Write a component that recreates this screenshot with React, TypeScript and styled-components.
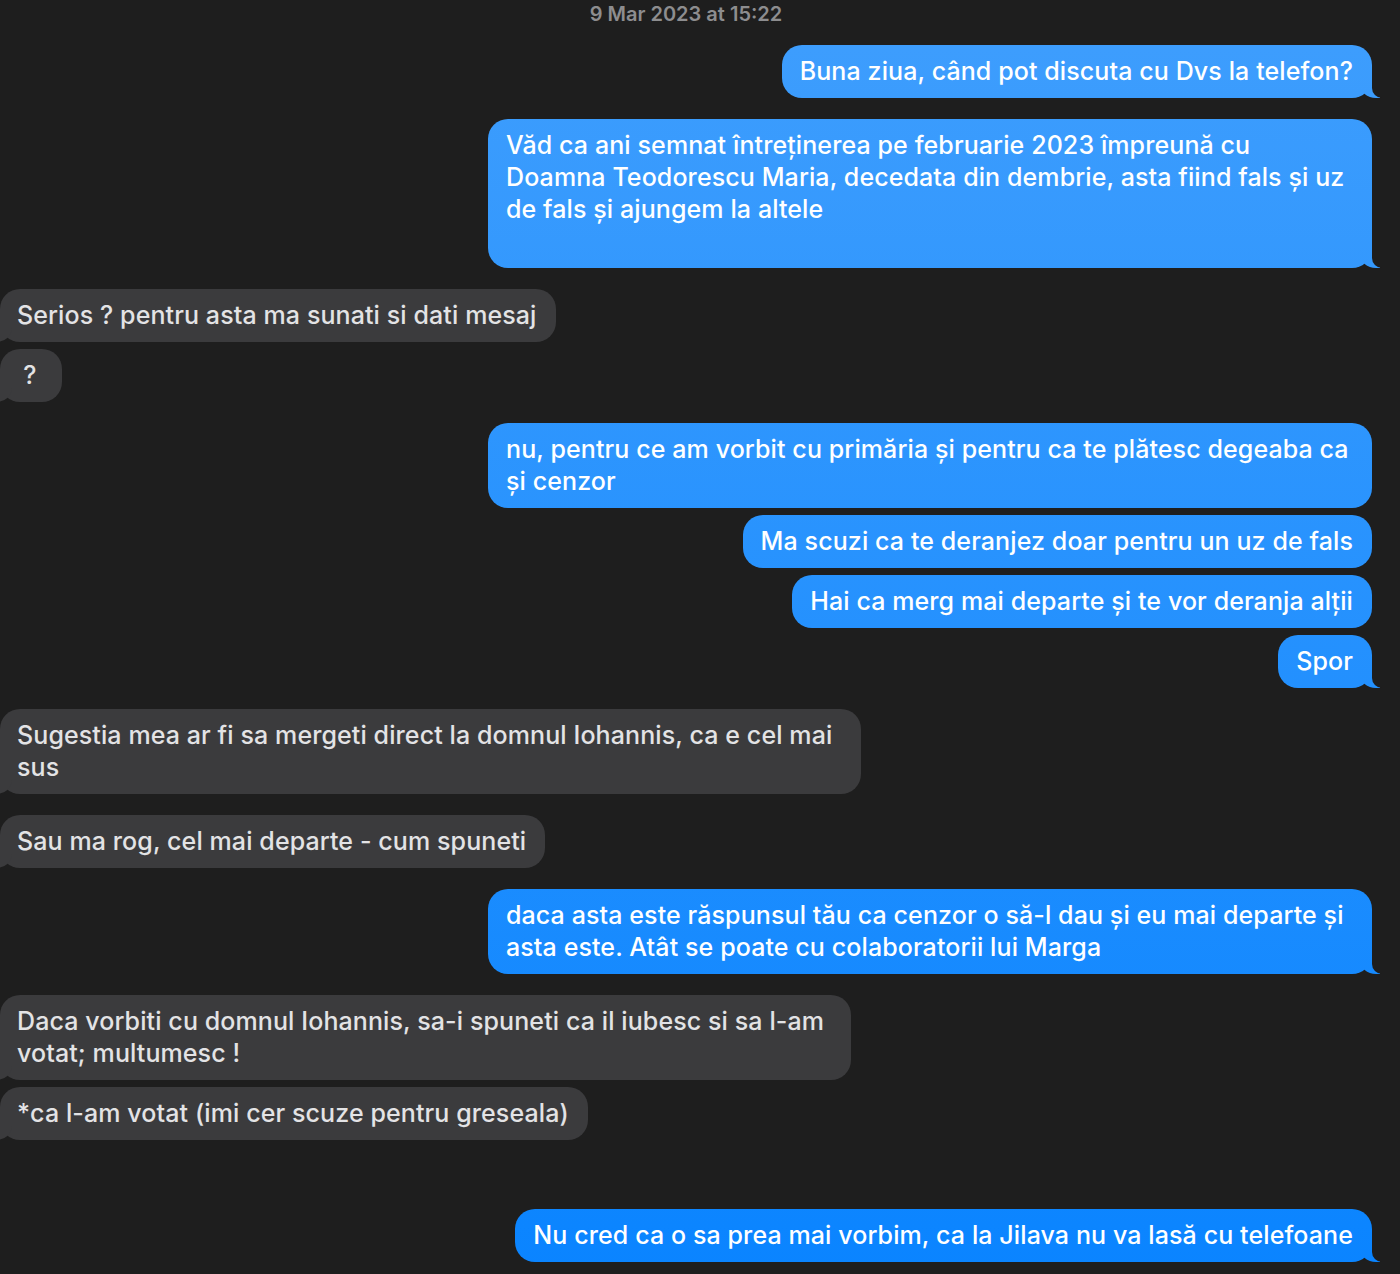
import styled, { createGlobalStyle, css } from 'styled-components';

const PAGE_BG = '#1e1e1e';
const BLUE = 'linear-gradient(180deg, #3f9efd 0px, #0a84ff 1274px) fixed';
const GRAY = '#3b3b3d';

const GlobalStyle = createGlobalStyle`
    html, body {
        margin: 0;
        padding: 0;
        background: ${PAGE_BG};
        overflow: hidden;
    }
    body {
        font-family: Inter, "Noto Sans", "Liberation Sans", sans-serif;
        -webkit-font-smoothing: antialiased;
    }
`

type Message = {
    me: boolean,
    lines: string[],
    gap: number,
    tail?: boolean,
    center?: boolean,
    width?: number
}

const messages: Message[] = [
    { me: true, gap: 17, tail: true, lines: ['Buna ziua, când pot discuta cu Dvs la telefon?'] },
    { me: true, gap: 21, tail: true, width: 884, lines: [
        'Văd ca ani semnat întreținerea pe februarie 2023 împreună cu',
        'Doamna Teodorescu Maria, decedata din dembrie, asta fiind fals și uz',
        'de fals și ajungem la altele',
        ''
    ] },
    { me: false, gap: 21, tail: true, lines: ['Serios ? pentru asta ma sunati si dati mesaj'] },
    { me: false, gap: 7, tail: true, center: true, lines: ['?'] },
    { me: true, gap: 21, width: 884, lines: [
        'nu, pentru ce am vorbit cu primăria și pentru ca te plătesc degeaba ca',
        'și cenzor'
    ] },
    { me: true, gap: 7, lines: ['Ma scuzi ca te deranjez doar pentru un uz de fals'] },
    { me: true, gap: 7, lines: ['Hai ca merg mai departe și te vor deranja alții'] },
    { me: true, gap: 7, tail: true, lines: ['Spor'] },
    { me: false, gap: 21, tail: true, width: 861, lines: [
        'Sugestia mea ar fi sa mergeti direct la domnul Iohannis, ca e cel mai',
        'sus'
    ] },
    { me: false, gap: 21, tail: true, lines: ['Sau ma rog, cel mai departe - cum spuneti'] },
    { me: true, gap: 21, tail: true, width: 884, lines: [
        'daca asta este răspunsul tău ca cenzor o să-l dau și eu mai departe și',
        'asta este. Atât se poate cu colaboratorii lui Marga'
    ] },
    { me: false, gap: 21, tail: true, width: 851, lines: [
        'Daca vorbiti cu domnul Iohannis, sa-i spuneti ca il iubesc si sa l-am',
        'votat; multumesc !'
    ] },
    { me: false, gap: 7, tail: true, lines: ['*ca l-am votat (imi cer scuze pentru greseala)'] },
    { me: true, gap: 69, tail: true, lines: ['Nu cred ca o sa prea mai vorbim, ca la Jilava nu va lasă cu telefoane'] },
]

const Page = styled('div')`
    display: flex;
    flex-direction: column;
    padding: 0 28px 12px 0;
    height: 100vh;
    box-sizing: border-box;
`

const Timestamp = styled('div')`
    text-align: center;
    line-height: 28px;
    font-size: 20px;
    font-weight: 600;
    color: #8d8d8f;
`

const Row = styled('div')<{ $me: boolean, $gap: number }>`
    display: flex;
    justify-content: ${p => p.$me ? 'flex-end' : 'flex-start'};
    margin-top: ${p => p.$gap}px;
`

const sentTail = css`
    &::before {
        content: "";
        position: absolute;
        bottom: 0;
        right: -8px;
        width: 20px;
        height: 20px;
        background: ${BLUE};
        border-bottom-left-radius: 16px 14px;
    }
    &::after {
        content: "";
        position: absolute;
        bottom: 0;
        right: -11px;
        width: 11px;
        height: 21px;
        background: ${PAGE_BG};
        border-bottom-left-radius: 10px;
    }
`

const receivedTail = css`
    &::before {
        content: "";
        position: absolute;
        bottom: 0;
        left: -8px;
        width: 20px;
        height: 20px;
        background: ${GRAY};
        border-bottom-right-radius: 16px 14px;
    }
    &::after {
        content: "";
        position: absolute;
        bottom: 0;
        left: -11px;
        width: 11px;
        height: 21px;
        background: ${PAGE_BG};
        border-bottom-right-radius: 10px;
    }
`

const Bubble = styled('div')<{ $me: boolean, $tail: boolean, $center: boolean, $width?: number }>`
    position: relative;
    box-sizing: border-box;
    width: ${p => p.$width ? `${p.$width}px` : 'auto'};
    min-width: 62px;
    padding: ${p => p.$me ? '10px 19px 11px 18px' : '10px 19px 11px 17px'};
    border-radius: 20px;
    font-size: 25px;
    font-weight: 500;
    line-height: 32px;
    letter-spacing: 0.1px;
    white-space: nowrap;
    text-align: ${p => p.$center ? 'center' : 'left'};
    background: ${p => p.$me ? BLUE : GRAY};
    color: ${p => p.$me ? '#ffffff' : '#e3e3e5'};
    ${p => p.$tail && (p.$me ? sentTail : receivedTail)}
`

const Text = styled('div')`
    position: relative;
    z-index: 1;
`

const Line = styled('div')`
    min-height: 32px;
`

const App = () => {
    return (
        <>
            <GlobalStyle />
            <Page>
                <Timestamp>9 Mar 2023 at 15:22</Timestamp>
                {messages.map((m, key) => (
                    <Row key={key} $me={m.me} $gap={m.gap}>
                        <Bubble $me={m.me} $tail={!!m.tail} $center={!!m.center} $width={m.width}>
                            <Text>
                                {m.lines.map((line, i) => (
                                    <Line key={i}>{line}</Line>
                                ))}
                            </Text>
                        </Bubble>
                    </Row>
                ))}
            </Page>
        </>
    )
}

export default App
